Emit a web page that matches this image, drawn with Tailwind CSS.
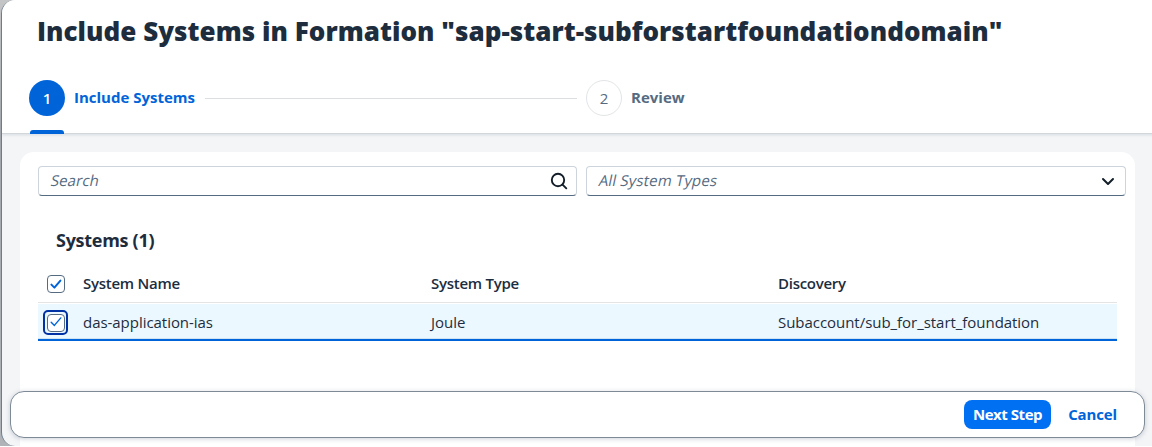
<!DOCTYPE html>
<html lang="en">
<head>
<meta charset="utf-8">
<title>Include Systems in Formation</title>
<script src="https://cdn.jsdelivr.net/npm/@tailwindcss/browser@4"></script>
</head>
<body class="h-[447px] w-[1152px] overflow-hidden bg-white font-['Open_Sans','Noto_Sans',sans-serif] text-[15px] leading-5 text-[#1d2d3e]">
<div class="h-[446px] overflow-hidden bg-linear-to-b from-[#c4c5c6] via-[#a0a6ac] via-30% to-[#b0b4b8]">
<main class="relative ml-px flex h-[446px] w-[1170px] flex-col overflow-hidden rounded-l-[14px] border-l border-[#6f7d8b] bg-[#f4f5f7]">

  <header class="h-[134px] shrink-0 border-b border-[#d3d6d9] bg-white pt-[11px] shadow-[0_1px_3px_rgba(85,107,129,0.18)]">
    <h1 class="ml-[35px] h-10 text-[26px] leading-10 font-extrabold tracking-[0.04px] whitespace-nowrap">Include Systems in Formation "sap-start-subforstartfoundationdomain"</h1>
    <nav class="mt-[29px] ml-[27px] flex">
      <div class="relative flex h-[54px] w-[557px] items-start">
        <span class="flex size-9 items-center justify-center rounded-full bg-[#0064d9] font-semibold text-white">1</span>
        <span class="ml-[9px] pt-[7px] font-bold whitespace-nowrap text-[#0064d9]">Include Systems</span>
        <span class="mt-[18px] mr-[9px] ml-[10px] h-px flex-1 bg-[#dcdee0]"></span>
        <span class="absolute top-[50px] left-px h-1 w-[34px] rounded-t-[3px] bg-[#0064d9]"></span>
      </div>
      <div class="flex items-start text-[#556b82]">
        <span class="flex size-9 items-center justify-center rounded-full border border-[#e2e4e6]">2</span>
        <span class="ml-[9px] pt-[7px] font-bold">Review</span>
      </div>
    </nav>
  </header>

  <section class="mt-[18px] ml-[18px] w-[1115px] flex-1 rounded-t-[14px] bg-white pt-[14px] pl-[18px]">
    <div class="flex gap-[9px] text-[#556b82]">
      <div class="flex h-[30px] w-[539px] items-center justify-between rounded-[4px] border border-[#cdd4db] border-b-[#556b81] pr-2 pl-3">
        <span class="-skew-x-12 pb-[2px] tracking-[0.1px]">Search</span>
        <svg class="size-[18px] text-[#131e29]" viewBox="0 0 18 18" fill="none" stroke="currentColor" stroke-width="1.9" stroke-linecap="round"><circle cx="8" cy="8" r="6.2"/><path d="M12.6 12.6 16.3 16.3"/></svg>
      </div>
      <div class="flex h-[30px] w-[540px] items-center justify-between rounded-[4px] border border-[#cdd4db] border-b-[#556b81] pr-[10px] pl-3">
        <span class="-skew-x-12 pb-[2px] tracking-[0.15px]">All System Types</span>
        <svg class="h-[9px] w-[14px] text-[#131e29]" viewBox="0 0 14 9" fill="none" stroke="currentColor" stroke-width="2" stroke-linecap="round" stroke-linejoin="round"><path d="M2 2 7 7 12 2"/></svg>
      </div>
    </div>

    <h2 class="mt-8 ml-[18px] h-6 text-[18px] leading-6 font-bold tracking-[-0.28px]">Systems (1)</h2>

    <div class="mt-[14px] w-[1079px]">
      <div class="flex h-[37px] items-center border-b border-[#e2e4e6] font-semibold tracking-[-0.27px]">
        <div class="w-[45px] pl-[9px]">
          <svg class="size-[18px]" viewBox="0 0 18 18" fill="none"><rect x=".5" y=".5" width="17" height="17" rx="3.5" fill="#fff" stroke="#556b81"/><path d="M4.4 9.6 7.4 12.6 13.4 5.6" stroke="#0064d9" stroke-width="2" stroke-linecap="round" stroke-linejoin="round"/></svg>
        </div>
        <div class="w-[348px] pb-[2px]">System Name</div>
        <div class="w-[347px] pb-[2px]">System Type</div>
        <div class="pb-[2px]">Discovery</div>
      </div>
      <div class="mt-px flex h-[37px] items-center border-b-2 border-[#0064d9] bg-[#ebf8ff] tracking-[-0.04px] shadow-[inset_0_-1px_0_#cfe3f3]">
        <div class="w-[45px] pt-[2px] pl-[5px]">
          <div class="flex size-[25px] items-center justify-center rounded-[5px] border-2 border-[#0032a5]">
            <svg class="size-[18px] shrink-0" viewBox="0 0 18 18" fill="none"><rect x=".5" y=".5" width="17" height="17" rx="3.5" fill="#fff" stroke="#556b81"/><path d="M4.2 8.3 7.4 11.4 13.8 3.9" stroke="#0064d9" stroke-width="1.4" stroke-linecap="round" stroke-linejoin="round"/></svg>
          </div>
        </div>
        <div class="w-[348px]">das-application-ias</div>
        <div class="w-[347px]">Joule</div>
        <div>Subaccount/sub_for_start_foundation</div>
      </div>
    </div>
  </section>

  <footer class="absolute top-[391px] left-2 flex h-[47px] w-[1135px] items-center justify-end rounded-[14px] border border-[#7f8a97] bg-white pr-[27px] shadow-[0_1px_5px_rgba(85,107,129,0.3)]">
    <button class="mr-[17px] h-[29px] w-[87px] rounded-[8px] bg-[#0070f2] pb-[2px] text-[15px] leading-5 font-bold tracking-[-0.45px] whitespace-nowrap text-white">Next Step</button>
    <button class="w-[49px] pb-[2px] text-[15px] leading-5 font-bold tracking-[-0.15px] text-[#0064d9]">Cancel</button>
  </footer>
</main>
</div>
</body>
</html>
